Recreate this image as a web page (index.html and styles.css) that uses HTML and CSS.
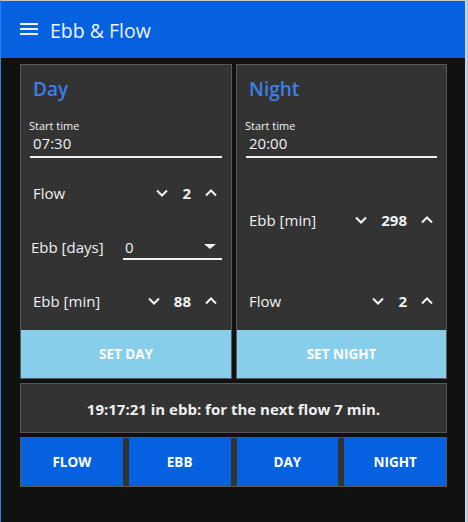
FILE: index.html
```html
<!DOCTYPE html>
<html lang="en">
<head>
<meta charset="utf-8">
<title>Ebb &amp; Flow</title>
<link rel="stylesheet" href="styles.css">
</head>
<body>
<div class="frame">
  <div class="app">
    <header class="topbar">
      <svg class="menu-icon" width="18" height="14" viewBox="0 0 18 14" aria-hidden="true">
        <rect x="0" y="0" width="18" height="2" fill="currentColor"/>
        <rect x="0" y="5" width="18" height="2" fill="currentColor"/>
        <rect x="0" y="10" width="18" height="2" fill="currentColor"/>
      </svg>
      <h1 class="app-title">Ebb &amp; Flow</h1>
    </header>

    <main class="content">
      <div class="cards">
        <section class="card">
          <h2 class="card-title">Day</h2>
          <div class="field">
            <span class="field-label">Start time</span>
            <span class="field-value">07:30</span>
          </div>
          <div class="rows rows-day">
            <div class="row">
              <span class="row-label">Flow</span>
              <div class="stepper">
                <svg class="chev" width="12" height="8" viewBox="0 0 12 8"><polyline points="1,1.5 6,6.5 11,1.5"/></svg>
                <span class="num">2</span>
                <svg class="chev" width="12" height="8" viewBox="0 0 12 8"><polyline points="1,6.5 6,1.5 11,6.5"/></svg>
              </div>
            </div>
            <div class="row">
              <span class="row-label row-label-tight">Ebb [days]</span>
              <div class="select">
                <span class="select-value">0</span>
                <span class="caret"></span>
              </div>
            </div>
            <div class="row">
              <span class="row-label">Ebb [min]</span>
              <div class="stepper">
                <svg class="chev" width="12" height="8" viewBox="0 0 12 8"><polyline points="1,1.5 6,6.5 11,1.5"/></svg>
                <span class="num">88</span>
                <svg class="chev" width="12" height="8" viewBox="0 0 12 8"><polyline points="1,6.5 6,1.5 11,6.5"/></svg>
              </div>
            </div>
          </div>
          <button class="set-btn">SET DAY</button>
        </section>

        <section class="card">
          <h2 class="card-title">Night</h2>
          <div class="field">
            <span class="field-label">Start time</span>
            <span class="field-value">20:00</span>
          </div>
          <div class="rows rows-night">
            <div class="row">
              <span class="row-label">Ebb [min]</span>
              <div class="stepper stepper-night">
                <svg class="chev" width="12" height="8" viewBox="0 0 12 8"><polyline points="1,1.5 6,6.5 11,1.5"/></svg>
                <span class="num">298</span>
                <svg class="chev" width="12" height="8" viewBox="0 0 12 8"><polyline points="1,6.5 6,1.5 11,6.5"/></svg>
              </div>
            </div>
            <div class="row">
              <span class="row-label">Flow</span>
              <div class="stepper stepper-night">
                <svg class="chev" width="12" height="8" viewBox="0 0 12 8"><polyline points="1,1.5 6,6.5 11,1.5"/></svg>
                <span class="num">2</span>
                <svg class="chev" width="12" height="8" viewBox="0 0 12 8"><polyline points="1,6.5 6,1.5 11,6.5"/></svg>
              </div>
            </div>
          </div>
          <button class="set-btn">SET NIGHT</button>
        </section>
      </div>

      <div class="status">19:17:21 in ebb: for the next flow 7 min.</div>

      <div class="actions">
        <button class="action-btn">FLOW</button>
        <button class="action-btn">EBB</button>
        <button class="action-btn">DAY</button>
        <button class="action-btn">NIGHT</button>
      </div>
    </main>
  </div>
</div>
</body>
</html>
```

FILE: styles.css
```css
* { box-sizing: border-box; }

html, body {
  margin: 0;
  padding: 0;
  background: #111111;
}

body {
  font-family: "Open Sans", "Noto Sans", sans-serif;
  color: #f0f0f0;
}

.frame {
  width: 468px;
  height: 522px;
  border-top: 1px solid #c9c9c9;
  border-left: 1px solid #2d7fe0;
  border-right: 1px solid #9cc4ef;
  background: #111111;
}

.app {
  height: 100%;
  border-right: 2px solid #d4d4d4;
}

.topbar {
  height: 57px;
  background: #0561e0;
  display: flex;
  align-items: center;
  padding-left: 19px;
  gap: 12px;
  color: #eef4ff;
}

.menu-icon {
  display: block;
  margin-top: 1px;
}

.app-title {
  margin: 0;
  font-size: 19.5px;
  font-weight: 400;
  line-height: 24px;
  padding-top: 2px;
}

.content {
  padding: 6px 18px 0 19px;
  display: flex;
  flex-direction: column;
  gap: 4px;
}

.cards {
  display: grid;
  grid-template-columns: 212px 1fr;
  gap: 4px;
}

.card {
  background: #333333;
  border: 1px solid #585858;
  padding: 12px 9px 0;
  display: flex;
  flex-direction: column;
  height: 315px;
}

.card-title {
  margin: 0;
  padding-left: 3px;
  font-size: 19px;
  font-weight: 600;
  line-height: 24px;
  color: #3b80e8;
}

.field {
  margin-top: 19px;
  display: flex;
  flex-direction: column;
  border-bottom: 2px solid #f2f2f2;
  padding-bottom: 2px;
}

.field-label {
  font-size: 11px;
  line-height: 12px;
  margin-left: -1px;
  margin-bottom: 1px;
}

.field-value {
  font-size: 15px;
  line-height: 21px;
  padding-left: 3px;
}

.rows {
  flex: 1;
  display: flex;
  flex-direction: column;
}

.rows-day {
  padding-top: 17px;
  gap: 18px;
}

.rows-night {
  padding-top: 44px;
  gap: 45px;
}

.row {
  height: 36px;
  display: flex;
  align-items: center;
  justify-content: space-between;
  padding-left: 3px;
  padding-right: 5px;
}

.row-label {
  font-size: 15px;
  line-height: 20px;
}

.row-label-tight {
  margin-left: -2px;
}

.stepper {
  display: flex;
  align-items: center;
  gap: 14px;
}

.stepper-night {
  margin-right: -1px;
}

.chev {
  display: block;
  fill: none;
  stroke: #f2f2f2;
  stroke-width: 2;
}

.num {
  font-size: 15px;
  font-weight: 700;
  line-height: 20px;
}

.select {
  width: 99px;
  height: 26px;
  margin-right: -5px;
  border-bottom: 2px solid #f2f2f2;
  display: flex;
  align-items: center;
  justify-content: space-between;
  padding: 2px 6px 0 2px;
}

.select-value {
  font-size: 15px;
  line-height: 20px;
}

.caret {
  width: 0;
  height: 0;
  border-left: 6px solid transparent;
  border-right: 6px solid transparent;
  border-top: 5px solid #f2f2f2;
  margin-top: -2px;
}

.set-btn {
  margin: 0 -9px;
  height: 48px;
  border: none;
  background: #87ceeb;
  color: #ffffff;
  font-family: inherit;
  font-size: 13.5px;
  font-weight: 700;
  cursor: pointer;
}

.status {
  height: 50px;
  background: #333333;
  border: 1px solid #585858;
  display: flex;
  align-items: center;
  justify-content: center;
  font-size: 15px;
  font-weight: 700;
  padding-top: 2px;
}

.actions {
  height: 50px;
  background: #333333;
  border: 1px solid #585858;
  display: grid;
  grid-template-columns: repeat(4, 1fr);
  gap: 6px;
}

.action-btn {
  border: none;
  background: #0561e0;
  color: #ffffff;
  font-family: inherit;
  font-size: 13.5px;
  font-weight: 700;
  cursor: pointer;
}
```
